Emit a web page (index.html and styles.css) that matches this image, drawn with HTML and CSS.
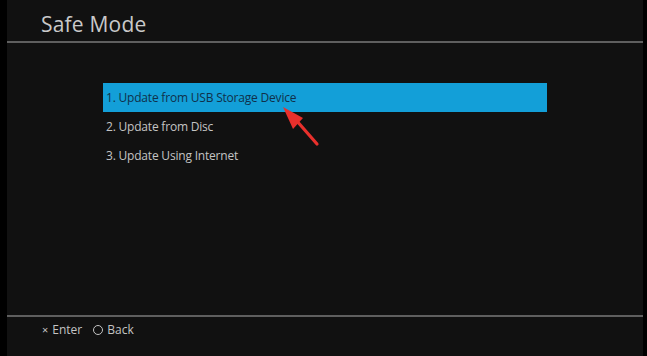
FILE: index.html
```html
<!DOCTYPE html>
<html lang="en">
<head>
    <meta charset="UTF-8">
    <title>Safe Mode</title>
    <link rel="stylesheet" href="styles.css">
</head>
<body>

    <div class="screen">
        <div class="header">
            <h2>Safe Mode</h2>
        </div>

        <div class="menu">
            <div class="item active">1. Update from USB Storage Device</div>
            <div class="item">2. Update from Disc</div>
            <div class="item">3. Update Using Internet</div>
        </div>

        <div class="footer">
            <span class="hint"><span class="cross">×</span>Enter</span>
            <span class="hint"><span class="circle"></span>Back</span>
        </div>

        <svg class="arrow" width="60" height="60" viewBox="0 0 60 60">
            <line x1="16" y1="14" x2="37" y2="38" stroke="#e8302c" stroke-width="3.2" stroke-linecap="round"/>
            <polygon points="3,1 23,12 13,23" fill="#e8302c"/>
        </svg>
    </div>

</body>
</html>
```

FILE: styles.css
```css
body {
    margin: 0;
    padding: 0;
    background: #000;
    font-family: 'Open Sans', sans-serif;
}

.screen {
    position: relative;
    margin: 0 4px 0 7px;
    height: 356px;
    background: #111;
    display: flex;
    flex-direction: column;
}

.header {
    height: 41px;
    border-bottom: 2px solid #5f5f5f;
    padding-left: 34px;
}

.header h2 {
    margin: 0;
    padding-top: 11px;
    font-weight: 400;
    font-size: 21px;
    line-height: 26px;
    color: #c9c9c9;
    letter-spacing: 0.2px;
}

.menu {
    margin: 40px 0 0 96px;
    width: 444px;
    flex: 1;
}

.item {
    height: 29px;
    line-height: 29px;
    padding-left: 3px;
    font-size: 12px;
    letter-spacing: -0.2px;
    color: #c4c4c4;
}

.item.active {
    background: #139fd8;
    color: #10304a;
}

.footer {
    height: 41px;
    border-top: 2px solid #5f5f5f;
    padding: 4px 0 0 35px;
    box-sizing: border-box;
    display: flex;
    align-items: flex-start;
    gap: 11px;
    font-size: 12px;
    line-height: 18px;
    color: #c4c4c4;
}

.hint {
    display: flex;
    align-items: center;
    gap: 4px;
}

.cross {
    font-size: 11px;
}

.circle {
    display: inline-block;
    width: 8px;
    height: 8px;
    border: 1.5px solid #c4c4c4;
    border-radius: 50%;
}

.arrow {
    position: absolute;
    left: 273px;
    top: 106px;
}
```
